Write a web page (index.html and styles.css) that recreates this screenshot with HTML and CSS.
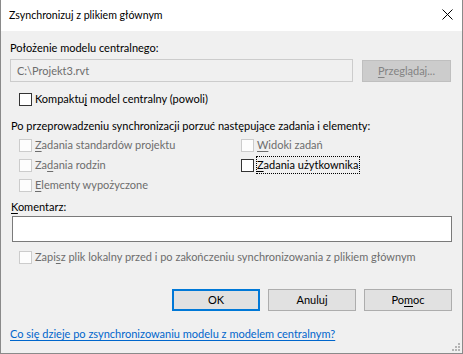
FILE: index.html
```html
<!DOCTYPE html>
<html lang="pl">
<head>
<meta charset="utf-8">
<link rel="stylesheet" href="styles.css">
</head>
<body>
<div class="window">
  <div class="titlebar">
    <span class="title">Zsynchronizuj z plikiem głównym</span>
    <svg class="close" width="11" height="11" viewBox="0 0 11 11"><path d="M0.5 0.5L10.5 10.5M10.5 0.5L0.5 10.5" stroke="#000" stroke-width="1" fill="none"/></svg>
  </div>
  <div class="content">
    <div class="label">Położenie modelu centralnego:</div>
    <div class="path-row">
      <div class="textbox path">C:\Projekt3.rvt</div>
      <div class="btn btn-disabled"><u>P</u>rzeglądaj...</div>
    </div>
    <div class="check compact"><span class="box"></span><span>Kompaktu<u>j</u> model centralny (powoli)</span></div>
    <div class="label section">Po przeprowadzeniu synchronizacji porzuć następujące zadania i elementy:</div>
    <div class="grid">
      <div class="check disabled"><span class="box"></span><span><u>Z</u>adania standardów projektu</span></div>
      <div class="check disabled"><span class="box"></span><span><u>W</u>idoki zadań</span></div>
      <div class="check disabled"><span class="box"></span><span>Za<u>d</u>ania rodzin</span></div>
      <div class="check"><span class="box"></span><span class="focus"><u>Z</u>adania użytkownika</span></div>
      <div class="check disabled"><span class="box"></span><span><u>E</u>lementy wypożyczone</span></div>
    </div>
    <div class="label comment-label"><u>K</u>omentarz:</div>
    <div class="textbox comment"></div>
    <div class="check disabled save"><span class="box"></span><span>Zapi<u>s</u>z plik lokalny przed i po zakończeniu synchronizowania z plikiem głównym</span></div>
    <div class="buttons">
      <div class="btn btn-default">OK</div>
      <div class="btn">Anuluj</div>
      <div class="btn">Po<u>m</u>oc</div>
    </div>
    <a class="link" href="#">Co się dzieje po zsynchronizowaniu modelu z modelem centralnym?</a>
  </div>
  <div class="grip">
    <span class="dot d1"></span><span class="dot d2"></span><span class="dot d3"></span>
    <span class="dot d4"></span><span class="dot d5"></span><span class="dot d6"></span>
  </div>
</div>
</body>
</html>
```
FILE: styles.css
```css
* { box-sizing: border-box; }
html, body { margin: 0; padding: 0; background: #f0f0f0; }
body {
  font-family: Lato, "Noto Sans", "Liberation Sans", sans-serif;
  font-size: 11px;
  color: #000;
}
u { text-decoration: underline; text-underline-offset: 2px; }
.window {
  position: relative;
  width: 463px;
  height: 354px;
  background: #f0f0f0;
  border: 1px solid #8a8a8a;
  border-top: none;
  display: flex;
  flex-direction: column;
}
.titlebar {
  height: 31px;
  background: #fff;
  display: flex;
  align-items: center;
  justify-content: space-between;
  padding: 0 9px 1px 8px;
}
.title { font-size: 10.6px; line-height: 16px; }
.close { display: block; margin-top: -1px; }
.content {
  flex: 1;
  display: flex;
  flex-direction: column;
  align-items: flex-start;
  padding: 9px 10px 0 9px;
}
.label { line-height: 16px; }
.path-row {
  margin-top: 3px;
  display: flex;
  align-items: center;
  gap: 9px;
}
.textbox {
  background: #fff;
  border: 1px solid #7a7a7a;
}
.path {
  width: 343px;
  height: 23px;
  background: #f0f0f0;
  border-color: #cccccc;
  color: #6d6d6d;
  padding: 3px 0 0 6px;
  line-height: 16px;
}
.btn {
  width: 88px;
  height: 22px;
  background: #e1e1e1;
  border: 1px solid #adadad;
  display: flex;
  align-items: center;
  justify-content: center;
  line-height: 16px;
  padding-bottom: 1px;
}
.btn-disabled {
  width: 89px;
  margin-top: 1px;
  background: #cccccc;
  border-color: #bfbfbf;
  color: #838383;
}
.btn-default { border: 2px solid #0078d7; }
.check {
  display: flex;
  align-items: center;
  height: 20px;
  line-height: 16px;
  margin-left: 9px;
}
.check .box {
  width: 13px;
  height: 13px;
  border: 1px solid #333;
  background: #fff;
  margin-right: 3px;
  flex: none;
}
.check.disabled { color: #6d6d6d; }
.check.disabled .box { border-color: #cccccc; background: #fdfdfd; }
.compact { margin-top: 7px; }
.section { margin-top: 9px; margin-left: 1px; }
.grid {
  display: grid;
  grid-template-columns: 222px auto;
  margin-left: 9px;
  margin-top: 1px;
}
.grid .check { margin-left: 0; }
.focus { outline: 1px dotted #000; outline-offset: 0; padding: 0 1px 0 0; }
.comment-label { margin-top: 4px; margin-left: 1px; }
.comment { width: 440px; height: 26px; margin-top: 1px; margin-left: 2px; }
.save { margin-top: 5px; }
.buttons {
  align-self: stretch;
  display: flex;
  justify-content: flex-end;
  gap: 8px;
  margin-top: 22px;
}
.link {
  margin-top: 15px;
  color: #0066cc;
  line-height: 16px;
  text-decoration: underline;
  text-underline-offset: 2px;
}
.grip { position: absolute; right: 1px; bottom: 1px; width: 9px; height: 9px; }
.dot { position: absolute; width: 2px; height: 2px; background: #b4b4b4; }
.d1 { right: 1px; top: 0; }
.d2 { right: 1px; top: 3px; }
.d3 { right: 4px; top: 3px; }
.d4 { right: 1px; top: 6px; }
.d5 { right: 4px; top: 6px; }
.d6 { right: 7px; top: 6px; }
```
